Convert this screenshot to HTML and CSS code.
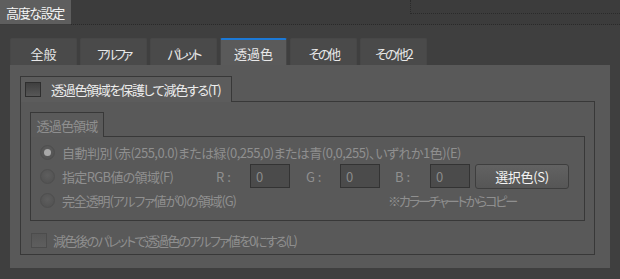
FILE: index.html
```html
<!DOCTYPE html>
<html lang="ja">
<head>
<meta charset="utf-8">
<link rel="stylesheet" href="styles.css">
</head>
<body>
<div class="screen">
  <div class="topbar">
    <div class="title-tab">高度な設定</div>
    <div class="topbar-rest">
      <div class="dockbox"></div>
    </div>
  </div>
  <div class="main">
    <div class="tabs">
      <div class="tab">全般</div>
      <div class="tab kana">アルファ</div>
      <div class="tab kana">パレット</div>
      <div class="tab active">透過色</div>
      <div class="tab sono">その他</div>
      <div class="tab sono2">その他2</div>
    </div>
    <div class="panel">
      <div class="group outer">
        <div class="group-head outer-head">
          <span class="check"></span>
          <span class="label t-title">透過色領域を保護して減色する(T)</span>
        </div>
        <div class="group-body outer-body">
          <div class="group inner">
            <div class="group-head inner-head">
              <span class="label dim t-inner">透過色領域</span>
            </div>
            <div class="group-body inner-body">
              <div class="row">
                <span class="radio on"></span>
                <span class="label dim t-row1">自動判別（赤(255,0.0)または緑(0,255,0)または青(0,0,255)、いずれか1色)(E)</span>
              </div>
              <div class="row">
                <span class="radio"></span>
                <span class="label dim cell-label">指定RGB値の領域(F)</span>
                <span class="label dim cell-r">R :</span>
                <span class="input">0</span>
                <span class="label dim cell-g">G :</span>
                <span class="input">0</span>
                <span class="label dim cell-b">B :</span>
                <span class="input">0</span>
                <span class="button">選択色(S)</span>
              </div>
              <div class="row">
                <span class="radio"></span>
                <span class="label dim cell-label3">完全透明(アルファ値が0)の領域(G)</span>
                <span class="label dim note">※カラーチャートからコピー</span>
              </div>
            </div>
          </div>
          <div class="row last-row">
            <span class="check dis"></span>
            <span class="label dim t-last">減色後のパレットで透過色のアルファ値を0にする(L)</span>
          </div>
        </div>
      </div>
    </div>
  </div>
</div>
</body>
</html>
```

FILE: styles.css
```css
* { box-sizing: border-box; }
html, body { margin: 0; padding: 0; }
body {
  background: #3f3f3f;
  font-family: "Noto Sans CJK JP", "Noto Sans CJK SC", sans-serif;
  font-size: 13px;
  font-feature-settings: "palt" 1;
  color: #ececec;
  width: 620px;
  height: 279px;
  overflow: hidden;
}
.screen { width: 620px; height: 279px; }

.topbar { display: flex; height: 25px; background: #3c3c3c; }
.title-tab {
  width: 71px; height: 24px; background: #5e5e5e; color: #f4f4f4;
  display: flex; align-items: center; justify-content: center;
  letter-spacing: -1.4px; padding-right: 1px;
}
.topbar-rest {
  flex: 1; height: 25px; border-bottom: 1px dotted #2a2a2a;
  display: flex; justify-content: flex-end;
}
.dockbox {
  width: 210px; height: 14px;
  border-left: 1px dotted #2a2a2a; border-bottom: 1px dotted #2a2a2a;
}

.main { padding: 13px 10px 0 10px; }
.tabs { display: flex; gap: 3px; height: 27px; }
.tab {
  width: 67px; height: 27px; background: #4a4a4a;
  border: 1px solid #474747; border-bottom: none;
  border-radius: 2px 2px 0 0;
  display: flex; align-items: center; justify-content: center;
  color: #e8e8e8; padding-top: 3px;
}
.tab.kana { letter-spacing: -3px; }
.tab.sono { letter-spacing: -2.5px; }
.tab.sono2 { letter-spacing: -2px; }
.tab.active { background: #5a5a5a; border-top: 2px solid #1c79d6; padding-top: 2px; }

.panel {
  background: #595959; height: 203px;
  padding: 11px 15px 0 10px;
}

.group-head {
  display: inline-flex; align-items: center;
  border: 1px solid #383838; border-bottom: none;
  background: #5c5c5c;
  position: relative; z-index: 1;
  margin-bottom: -1px;
}
.group-body { border: 1px solid #383838; }

.outer-head { width: 212px; height: 26px; padding-left: 4px; gap: 10px; }
.outer-body { height: 154px; padding: 10px 9px 0 9px; }
.inner-head { width: 74px; height: 25px; justify-content: center; background: #5a5a5a; }
.inner-body { height: 85px; padding: 3px 0 0 9px; }

.check {
  width: 16px; height: 15px; flex: none;
  border: 1px solid #2e2e2e;
  background: linear-gradient(#3f3f3f, #575757);
}
.check.dis { border-color: #4c4c4c; background: linear-gradient(#565656, #5e5e5e); }

.label { white-space: nowrap; }
.dim { color: #8f8f8f; }
.t-title { letter-spacing: -1.3px; }
.t-inner { letter-spacing: -0.8px; }
.t-row1 { letter-spacing: -0.52px; }
.t-last { letter-spacing: -1.75px; }

.row { display: flex; align-items: center; height: 24px; }
.radio {
  width: 15px; height: 15px; border-radius: 50%; flex: none;
  border: 1px solid #4e4e4e;
  background: radial-gradient(circle at 50% 40%, #5e5e5e, #4f4f4f);
  margin-right: 7px;
  display: flex; align-items: center; justify-content: center;
}
.radio.on::after {
  content: ""; width: 7px; height: 7px; border-radius: 50%; background: #a8a8a8;
}
.cell-label { width: 154px; letter-spacing: -0.67px; }
.cell-label3 { width: 326px; letter-spacing: -1.15px; }
.cell-r { width: 34px; }
.cell-g { width: 50px; padding-left: 16px; }
.cell-b { width: 50px; padding-left: 15px; }
.input {
  width: 40px; height: 24px; background: #4b4b4b; border: 1px solid #333;
  color: #8a8a8a; padding-left: 5px; display: flex; align-items: center; flex: none;
}
.button {
  margin-left: 5px; width: 94px; height: 25px; border-radius: 3px;
  border: 1px solid #3e3e3e;
  background: linear-gradient(#626262, #565656);
  color: #f4f4f4;
  display: flex; align-items: center; justify-content: center;
  letter-spacing: -0.3px;
}
.note { letter-spacing: -2.1px; }
.last-row { margin-top: 11px; height: 16px; padding-left: 1px; gap: 6px; }
```
